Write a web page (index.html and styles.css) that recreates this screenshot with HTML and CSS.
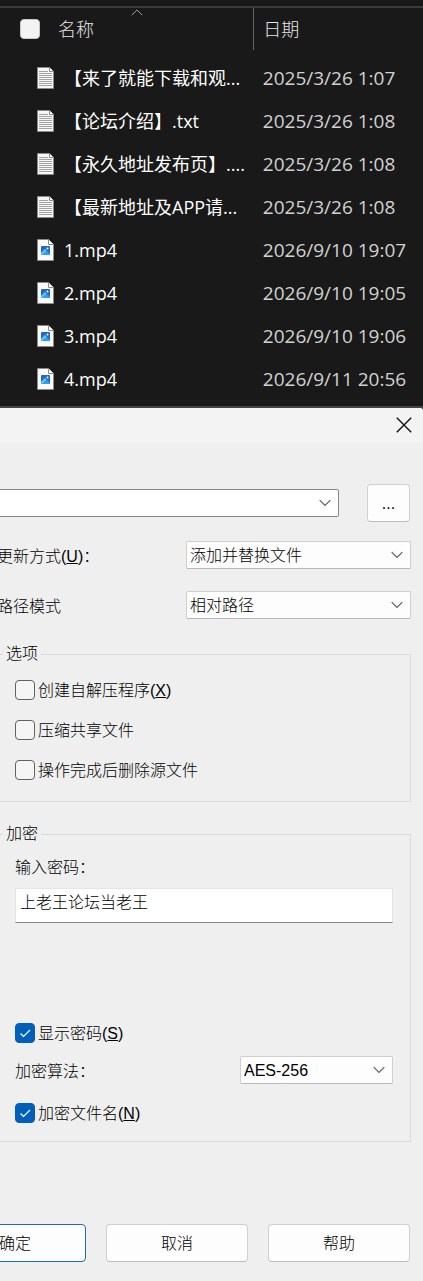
FILE: index.html
```html
<!DOCTYPE html>
<html lang="zh-CN">
<head>
  <meta charset="UTF-8">
  <meta name="viewport" content="width=device-width, initial-scale=1.0">
  <title>添加到压缩包</title>
  <link rel="stylesheet" href="styles.css">
</head>
<body>
  <!-- 图标 -->
  <svg width="0" height="0" class="sprite" aria-hidden="true">
    <symbol id="txt" viewBox="0 0 17 22">
      <path d="M.5.5h12l4 4v17H.5z" fill="#f7f7f7" stroke="#8a8a8a"/>
      <path d="M12.5.5v4h4" fill="#fff" stroke="#8a8a8a"/>
      <path d="M2 4.5h9M2 6.5h13M2 8.5h13M2 10.5h13M2 12.5h13M2 14.5h13M2 16.5h13M2 18.5h13" stroke="#a3a3a3"/>
    </symbol>
    <symbol id="mp4" viewBox="0 0 17 22">
      <path d="M.5.5h11l5 5v16H.5z" fill="#fafafa" stroke="#8a8a8a"/>
      <path d="M11.5.5v5h5" fill="#fff" stroke="#8a8a8a"/>
      <rect x="4" y="7" width="9" height="9" rx="1" fill="#2467c4"/>
      <path d="M4 14l4-4 5 5q0 1-1 1H5q-1 0-1-1z" fill="#2f9df0"/>
      <path d="M4 14l4-4 1.500 1.500L5 16q-1 0-1-1z" fill="#5cc8fa"/>
      <circle cx="10.500" cy="9.500" r="1" fill="#fff"/>
    </symbol>
    <symbol id="down" viewBox="0 0 12 8">
      <path d="M.7 1.200L6 6.500l5.300-5.300" fill="none" stroke="#5f5f5f" stroke-width="1.200"/>
    </symbol>
    <symbol id="tick" viewBox="0 0 20 20">
      <path d="M5.500 10.500l3 3 6.500-6.500" fill="none" stroke="#fff" stroke-width="1.200"/>
    </symbol>
  </svg>

  <section class="explorer">
    <table class="files">
      <thead>
        <tr>
          <th class="col-name">
            <svg class="sort" viewBox="0 0 12 7"><path d="M.7 6.200L6 .9l5.300 5.300" fill="none" stroke="#a0a0a0"/></svg>
            <div class="cell"><input type="checkbox" class="check-all" aria-label="全选">名称</div>
          </th>
          <th class="col-date">日期</th>
        </tr>
      </thead>
      <tbody>
        <tr>
          <td><div class="cell file"><svg class="icon"><use href="#txt"/></svg>【来了就能下载和观...</div></td>
          <td class="date">2025/3/26 1:07</td>
        </tr>
        <tr>
          <td><div class="cell file"><svg class="icon"><use href="#txt"/></svg>【论坛介绍】.txt</div></td>
          <td class="date">2025/3/26 1:08</td>
        </tr>
        <tr>
          <td><div class="cell file"><svg class="icon"><use href="#txt"/></svg>【永久地址发布页】....</div></td>
          <td class="date">2025/3/26 1:08</td>
        </tr>
        <tr>
          <td><div class="cell file"><svg class="icon"><use href="#txt"/></svg>【最新地址及APP请...</div></td>
          <td class="date">2025/3/26 1:08</td>
        </tr>
        <tr>
          <td><div class="cell file"><svg class="icon"><use href="#mp4"/></svg>1.mp4</div></td>
          <td class="date">2026/9/10 19:07</td>
        </tr>
        <tr>
          <td><div class="cell file"><svg class="icon"><use href="#mp4"/></svg>2.mp4</div></td>
          <td class="date">2026/9/10 19:05</td>
        </tr>
        <tr>
          <td><div class="cell file"><svg class="icon"><use href="#mp4"/></svg>3.mp4</div></td>
          <td class="date">2026/9/10 19:06</td>
        </tr>
        <tr>
          <td><div class="cell file"><svg class="icon"><use href="#mp4"/></svg>4.mp4</div></td>
          <td class="date">2026/9/11 20:56</td>
        </tr>
      </tbody>
    </table>
  </section>

  <section class="dialog">
    <div class="titlebar">
      <button type="button" class="close" aria-label="关闭">
        <svg width="16" height="16" viewBox="0 0 16 16"><path d="M.8.8l14.400 14.400M15.200.8L.8 15.200" stroke="#111" stroke-width="1.400"/></svg>
      </button>
    </div>

    <form class="content">
      <div class="row archive">
        <div class="select path">
          <select aria-label="压缩包"><option></option></select>
          <svg><use href="#down"/></svg>
        </div>
        <button type="button" class="btn browse">...</button>
      </div>

      <div class="row update">
        <label for="update">更新方式(<u>U</u>)：</label>
        <div class="select wide">
          <select id="update"><option>添加并替换文件</option></select>
          <svg><use href="#down"/></svg>
        </div>
      </div>

      <div class="row">
        <label for="mode">路径模式</label>
        <div class="select wide">
          <select id="mode"><option>相对路径</option></select>
          <svg><use href="#down"/></svg>
        </div>
      </div>

      <fieldset class="options">
        <legend>选项</legend>
        <label class="check">
          <input type="checkbox"><svg><use href="#tick"/></svg>
          <span>创建自解压程序(<u>X</u>)</span>
        </label>
        <label class="check">
          <input type="checkbox"><svg><use href="#tick"/></svg>
          <span>压缩共享文件</span>
        </label>
        <label class="check">
          <input type="checkbox"><svg><use href="#tick"/></svg>
          <span>操作完成后删除源文件</span>
        </label>
      </fieldset>

      <fieldset class="encrypt">
        <legend>加密</legend>
        <label for="password">输入密码：</label>
        <input type="text" id="password" class="password" value="上老王论坛当老王">
        <label class="check">
          <input type="checkbox" checked><svg><use href="#tick"/></svg>
          <span>显示密码(<u>S</u>)</span>
        </label>
        <div class="row method">
          <label for="method">加密算法：</label>
          <div class="select">
            <select id="method"><option>AES-256</option></select>
            <svg><use href="#down"/></svg>
          </div>
        </div>
        <label class="check">
          <input type="checkbox" checked><svg><use href="#tick"/></svg>
          <span>加密文件名(<u>N</u>)</span>
        </label>
      </fieldset>

      <div class="buttons">
        <button type="button" class="btn primary">确定</button>
        <button type="button" class="btn">取消</button>
        <button type="button" class="btn">帮助</button>
      </div>
    </form>
  </section>
</body>
</html>
```
FILE: styles.css
```css
* {
  box-sizing: border-box;
}

body {
  margin: 0;
  background-color: #191919;
  font-family: "Liberation Sans", "Noto Sans CJK SC", sans-serif;
  font-size: 16px;
  font-weight: 300;
  line-height: 20px;
  color: #000;
}

.sprite {
  position: absolute;
}

/* 文件列表 */
.explorer {
  margin-top: 6px;
  border-top: 2px solid #3a3a3a;
  border-bottom: 2px solid #444;
  color: #fff;
  font-family: "Open Sans", "Noto Sans CJK SC", sans-serif;
  font-size: 18px;
  font-weight: 400;
  padding-bottom: 6px;
}

.files {
  width: 100%;
  table-layout: fixed;
  border-collapse: collapse;
  white-space: nowrap;
}

.files th {
  height: 42px;
  padding: 0;
  font-weight: 300;
  text-align: left;
  color: #e6e6e6;
}

.files td {
  height: 43px;
  padding: 0;
}

.files tbody::before {
  content: "";
  display: block;
  height: 6px;
}

.files .col-name {
  position: relative;
  width: 60%;
  border-right: 1px solid #636363;
}

.files .col-date,
.files .date {
  padding-left: 9px;
}

.files .date {
  font-size: 19px;
  color: #d2d2d2;
}

.cell {
  display: flex;
  align-items: center;
  padding-left: 20px;
}

.cell.file {
  gap: 10px;
  padding-left: 37px;
}

.icon {
  flex: none;
  width: 17px;
  height: 22px;
}

.sort {
  position: absolute;
  top: 1px;
  left: 131px;
  width: 12px;
  height: 7px;
}

.check-all {
  appearance: none;
  width: 20px;
  height: 20px;
  margin: 0 18px 0 0;
  border: 1px solid #c8c8c8;
  border-radius: 4px;
  background-color: #f3f3f3;
}

/* 对话框 */
.dialog {
  overflow: hidden;
  border-top-right-radius: 3px;
  background-color: #efefef;
}

.titlebar {
  display: flex;
  justify-content: flex-end;
  height: 35px;
  background-color: #f3f3f3;
}

.close {
  display: flex;
  align-items: center;
  justify-content: center;
  width: 38px;
  height: 34px;
  padding: 0;
  border: 0;
  background: none;
}

/* 左侧内容超出窗口边缘 */
.content {
  margin-left: -3px;
  padding: 41px 12px 19px 0;
}

.row {
  display: flex;
  align-items: center;
  justify-content: space-between;
}

.row label {
  padding-top: 3px;
}

.archive {
  gap: 28px;
  margin-bottom: 19px;
  padding-right: 1px;
}

.update {
  margin-bottom: 22px;
}

.select {
  position: relative;
}

.select select {
  appearance: none;
  display: block;
  width: 100%;
  height: 28px;
  padding: 1px 28px 0 3px;
  border: 1px solid #cfcfcf;
  border-bottom-color: #b8b8b8;
  border-radius: 2px;
  background-color: #fdfdfd;
  color: #000;
  font: inherit;
}

.select svg {
  position: absolute;
  top: 10px;
  right: 8px;
  width: 12px;
  height: 8px;
  pointer-events: none;
}

.select.wide {
  width: 225px;
}

.path {
  flex: 1;
}

.path select {
  border-color: #868686;
  background-color: #fff;
}

.btn {
  flex: none;
  width: 142px;
  height: 38px;
  padding: 2px 0 0;
  border: 1px solid #d0d0d0;
  border-bottom-color: #bbb;
  border-radius: 4px;
  background-color: #fdfdfd;
  color: #000;
  font: inherit;
}

.browse {
  width: 43px;
}

.primary {
  border-color: #1a70b0;
}

fieldset {
  display: flex;
  flex-direction: column;
  align-items: flex-start;
  min-width: 0;
  margin: 0;
  padding: 0 17px 0 17px;
  border: 1px solid #dadada;
}

legend {
  margin-left: -12px;
  padding: 0 3px;
}

.options {
  gap: 20px;
  margin-top: 25px;
  padding-top: 16px;
  padding-bottom: 21px;
}

.encrypt {
  margin-top: 22px;
  padding-top: 14px;
  padding-bottom: 18px;
}

.check {
  position: relative;
  display: flex;
  align-items: center;
  gap: 3px;
}

.check span {
  margin: 1px 0 -1px;
}

.check input {
  appearance: none;
  width: 20px;
  height: 20px;
  margin: 0;
  border: 1px solid #626262;
  border-radius: 4px;
  background-color: #f5f5f5;
}

.check svg {
  position: absolute;
  left: 0;
  width: 20px;
  height: 20px;
  visibility: hidden;
}

.check input:checked {
  border-color: #005fb8;
  background-color: #005fb8;
}

.check input:checked + svg {
  visibility: visible;
}

.password {
  width: 100%;
  height: 35px;
  margin: 10px 0 100px;
  padding: 0 4px 10px;
  border: 1px solid #e5e5e5;
  border-bottom-color: #868686;
  background-color: #fff;
  color: #000;
  font: inherit;
}

.method {
  width: 100%;
  margin: 13px 0 19px;
}

.method .select {
  width: 153px;
}

.buttons {
  display: flex;
  justify-content: flex-end;
  gap: 20px;
  margin-top: 82px;
  padding-right: 1px;
}
```
